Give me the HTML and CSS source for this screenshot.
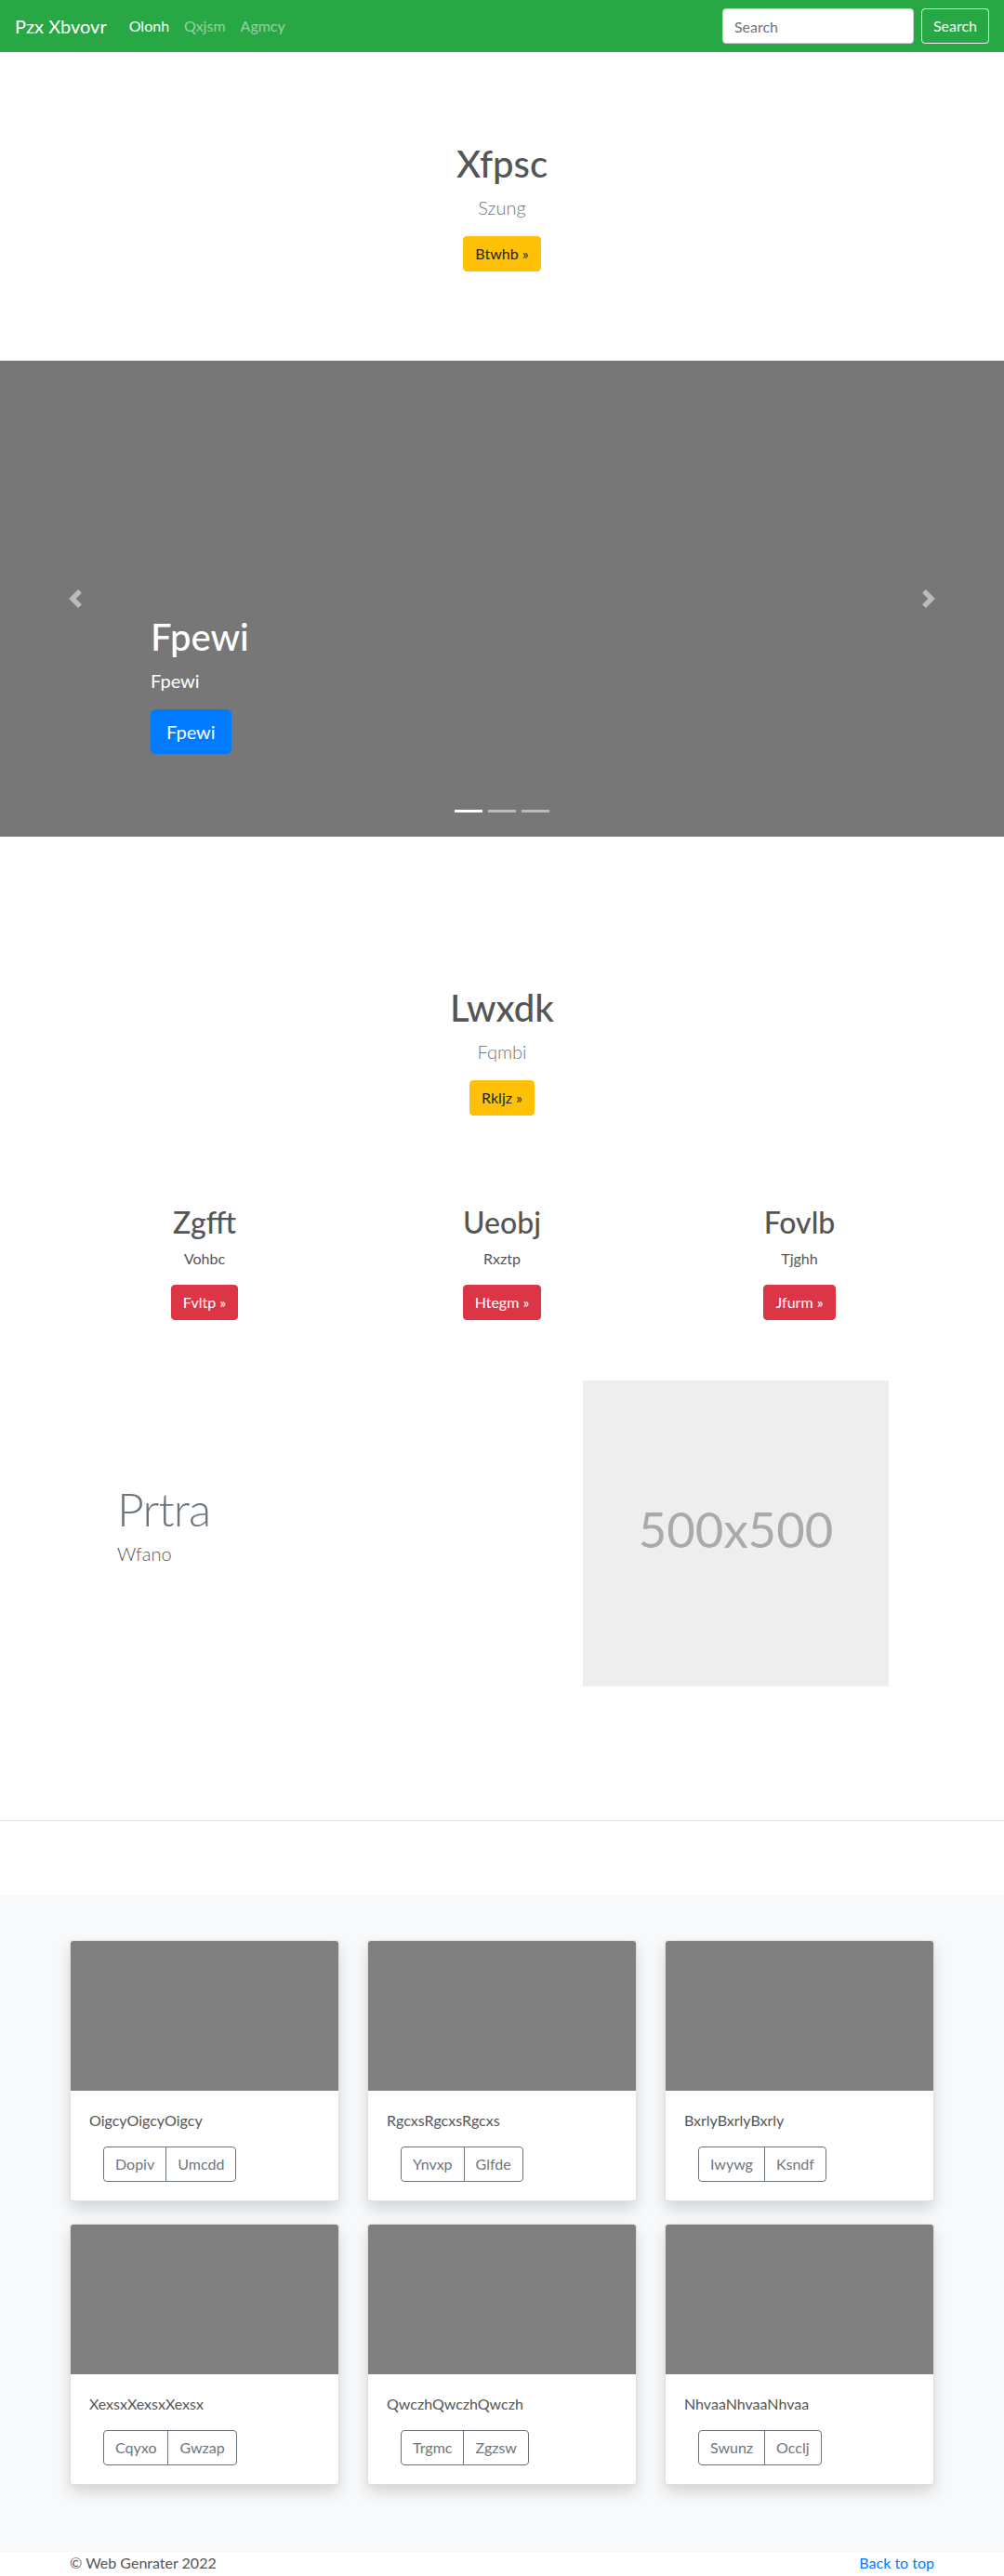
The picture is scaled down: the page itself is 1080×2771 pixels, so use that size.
FILE: index.html
```html
<!DOCTYPE html>
<html lang="en">
<head>
<meta charset="utf-8">
<title>Pzx Xbvovr</title>
<link rel="stylesheet" href="styles.css">
</head>
<body>
<header class="navbar">
  <a class="brand" href="#">Pzx Xbvovr</a>
  <ul class="nav">
    <li><a class="nav-link active" href="#">Olonh</a></li>
    <li><a class="nav-link" href="#">Qxjsm</a></li>
    <li><a class="nav-link" href="#">Agmcy</a></li>
  </ul>
  <form class="search">
    <input class="search-input" type="text" placeholder="Search">
    <button class="btn btn-outline-light" type="button">Search</button>
  </form>
</header>

<main>
  <section class="hero">
    <h1 class="hero-title">Xfpsc</h1>
    <p class="lead">Szung</p>
    <a class="btn btn-warning" href="#">Btwhb &raquo;</a>
  </section>

  <div class="carousel">
    <ol class="indicators">
      <li class="active"></li>
      <li></li>
      <li></li>
    </ol>
    <div class="caption">
      <h1 class="caption-title">Fpewi</h1>
      <p class="caption-text">Fpewi</p>
      <p class="caption-action"><a class="btn btn-lg btn-primary" href="#">Fpewi</a></p>
    </div>
    <a class="control control-prev" href="#">
      <svg viewBox="0 0 8 8" width="20" height="20"><path fill="#fff" d="M5.25 0l-4 4 4 4 1.5-1.5L4.25 4l2.5-2.5L5.25 0z"/></svg>
    </a>
    <a class="control control-next" href="#">
      <svg viewBox="0 0 8 8" width="20" height="20"><path fill="#fff" d="M2.75 0l-1.5 1.5L3.75 4l-2.5 2.5L2.75 8l4-4-4-4z"/></svg>
    </a>
  </div>

  <section class="hero hero-second">
    <h1 class="hero-title">Lwxdk</h1>
    <p class="lead">Fqmbi</p>
    <a class="btn btn-warning" href="#">Rkljz &raquo;</a>
  </section>

  <div class="marketing">
    <div class="col">
      <h2 class="col-title">Zgfft</h2>
      <p class="col-text">Vohbc</p>
      <a class="btn btn-danger" href="#">Fvltp &raquo;</a>
    </div>
    <div class="col">
      <h2 class="col-title">Ueobj</h2>
      <p class="col-text">Rxztp</p>
      <a class="btn btn-danger" href="#">Htegm &raquo;</a>
    </div>
    <div class="col">
      <h2 class="col-title">Fovlb</h2>
      <p class="col-text">Tjghh</p>
      <a class="btn btn-danger" href="#">Jfurm &raquo;</a>
    </div>
  </div>

  <div class="featurette">
    <div class="feature-text">
      <h2 class="feature-heading">Prtra</h2>
      <p class="feature-lead">Wfano</p>
    </div>
    <svg class="feature-img" viewBox="0 0 500 500" width="329" height="329">
      <rect width="100%" height="100%" fill="#eee"/>
      <text x="50%" y="50%" fill="#aaa" dy=".3em" text-anchor="middle" class="placeholder-text">500x500</text>
    </svg>
  </div>

  <hr class="divider">

  <div class="album">
    <div class="album-grid">
      <div class="card">
        <div class="card-img"></div>
        <div class="card-body">
          <p class="card-text">OigcyOigcyOigcy</p>
          <div class="btn-group"><button class="btn btn-outline-secondary" type="button">Dopiv</button><button class="btn btn-outline-secondary" type="button">Umcdd</button></div>
        </div>
      </div>
      <div class="card">
        <div class="card-img"></div>
        <div class="card-body">
          <p class="card-text">RgcxsRgcxsRgcxs</p>
          <div class="btn-group"><button class="btn btn-outline-secondary" type="button">Ynvxp</button><button class="btn btn-outline-secondary" type="button">Glfde</button></div>
        </div>
      </div>
      <div class="card">
        <div class="card-img"></div>
        <div class="card-body">
          <p class="card-text">BxrlyBxrlyBxrly</p>
          <div class="btn-group"><button class="btn btn-outline-secondary" type="button">Iwywg</button><button class="btn btn-outline-secondary" type="button">Ksndf</button></div>
        </div>
      </div>
      <div class="card">
        <div class="card-img"></div>
        <div class="card-body">
          <p class="card-text">XexsxXexsxXexsx</p>
          <div class="btn-group"><button class="btn btn-outline-secondary" type="button">Cqyxo</button><button class="btn btn-outline-secondary" type="button">Gwzap</button></div>
        </div>
      </div>
      <div class="card">
        <div class="card-img"></div>
        <div class="card-body">
          <p class="card-text">QwczhQwczhQwczh</p>
          <div class="btn-group"><button class="btn btn-outline-secondary" type="button">Trgmc</button><button class="btn btn-outline-secondary" type="button">Zgzsw</button></div>
        </div>
      </div>
      <div class="card">
        <div class="card-img"></div>
        <div class="card-body">
          <p class="card-text">NhvaaNhvaaNhvaa</p>
          <div class="btn-group"><button class="btn btn-outline-secondary" type="button">Swunz</button><button class="btn btn-outline-secondary" type="button">Occlj</button></div>
        </div>
      </div>
    </div>
  </div>
</main>

<footer class="footer">
  <p class="copy">&copy; Web Genrater 2022</p>
  <p class="back"><a href="#">Back to top</a></p>
</footer>
</body>
</html>
```

FILE: styles.css
```css
* { box-sizing: border-box; }

body {
  margin: 0;
  font-family: Lato, "Noto Sans", "Liberation Sans", sans-serif;
  font-size: 16px;
  line-height: 1.5;
  color: #555;
  background: #fff;
}

/* Navbar */
.navbar {
  display: flex;
  align-items: center;
  height: 56px;
  padding: 8px 16px;
  background: #28a745;
}
.brand {
  font-size: 20px;
  line-height: 30px;
  padding: 5px 0;
  margin-right: 16px;
  color: #fff;
  text-decoration: none;
}
.nav {
  display: flex;
  list-style: none;
  margin: 0;
  padding: 0;
}
.nav-link {
  display: block;
  padding: 8px;
  line-height: 24px;
  color: rgba(255, 255, 255, 0.5);
  text-decoration: none;
}
.nav-link.active { color: #fff; }
.search {
  margin: 0 0 0 auto;
  display: flex;
}
.search-input {
  width: 206px;
  height: 38px;
  margin-right: 8px;
  padding: 6px 12px;
  font: inherit;
  color: #495057;
  background: #fff;
  border: 1px solid #ced4da;
  border-radius: 4px;
}
.search-input::placeholder { color: #6c757d; }

/* Buttons */
.btn {
  display: inline-block;
  font-family: inherit;
  font-size: 16px;
  line-height: 24px;
  padding: 6px 12px;
  border: 1px solid transparent;
  border-radius: 4px;
  text-decoration: none;
  background: transparent;
  cursor: pointer;
}
.btn-outline-light { color: #f8f9fa; border-color: #f8f9fa; }
.btn-warning { color: #212529; background: #ffc107; border-color: #ffc107; }
.btn-danger { color: #fff; background: #dc3545; border-color: #dc3545; }
.btn-primary { color: #fff; background: #007bff; border-color: #007bff; }
.btn-outline-secondary { color: #6c757d; border-color: #6c757d; }
.btn-lg {
  font-size: 20px;
  line-height: 30px;
  padding: 8px 16px;
  border-radius: 5px;
}

/* Hero */
.hero {
  text-align: center;
  padding: 96px 0;
}
.hero-title {
  font-size: 40px;
  font-weight: 500;
  line-height: 1.2;
  margin: 0 0 8px;
}
.lead {
  font-size: 20px;
  font-weight: 300;
  line-height: 30px;
  margin: 0 0 16px;
  color: #6c757d;
}
.hero-second { padding-top: 96px; }

/* Carousel */
.carousel {
  position: relative;
  height: 512px;
  margin-bottom: 64px;
  background: #777;
  overflow: hidden;
}
.caption {
  position: absolute;
  left: 15%;
  right: 15%;
  bottom: 53px;
  padding: 20px 0;
  color: #fff;
  text-align: left;
  z-index: 10;
}
.caption-title {
  font-size: 40px;
  font-weight: 500;
  line-height: 1.2;
  margin: 0 0 8px;
}
.caption-text {
  font-size: 20px;
  line-height: 30px;
  margin: 0 0 16px;
}
.caption-action { margin: 0 0 16px; }
.control {
  position: absolute;
  top: 0;
  bottom: 0;
  width: 15%;
  display: flex;
  align-items: center;
  justify-content: center;
  opacity: 0.5;
}
.control svg { display: block; }
.control-prev { left: 0; }
.control-next { right: 0; }
.indicators {
  position: absolute;
  left: 0;
  right: 0;
  bottom: 0;
  margin: 0 0 16px;
  padding: 0;
  list-style: none;
  display: flex;
  justify-content: center;
  z-index: 15;
}
.indicators li {
  width: 30px;
  height: 23px;
  margin: 0 3px;
  border-top: 10px solid transparent;
  border-bottom: 10px solid transparent;
  background: #fff;
  background-clip: padding-box;
  opacity: 0.5;
}
.indicators li.active { opacity: 1; }

/* Marketing columns */
.marketing {
  width: 960px;
  margin: 0 auto;
  display: grid;
  grid-template-columns: repeat(3, 1fr);
  padding-bottom: 65px;
}
.col {
  text-align: center;
  padding: 0 15px;
}
.col-title {
  font-size: 32px;
  font-weight: 500;
  line-height: 1.2;
  margin: 0 0 8px;
}
.col-text {
  margin: 0 0 16px;
}

/* Featurette */
.featurette {
  display: flex;
  align-items: center;
  padding-left: 126px;
}
.feature-text {
  flex: 0 0 501px;
}
.feature-heading {
  font-size: 50px;
  font-weight: 300;
  line-height: 1;
  letter-spacing: -0.8px;
  margin: 0 0 8px;
  color: #6c757d;
}
.feature-lead {
  font-size: 20px;
  font-weight: 300;
  line-height: 30px;
  margin: 0 0 16px;
}
.feature-img {
  display: block;
  flex: 0 0 329px;
}
.placeholder-text {
  font-family: Lato, "Noto Sans", sans-serif;
  font-size: 80px;
}

.divider {
  margin: 144px 0 80px;
  border: 0;
  border-top: 1px solid rgba(0, 0, 0, 0.1);
}

/* Album */
.album {
  background: #f8f9fa;
  padding: 48px 0;
}
.album-grid {
  width: 930px;
  margin: 0 auto;
  display: grid;
  grid-template-columns: repeat(3, 290px);
  column-gap: 30px;
  row-gap: 24px;
  padding-bottom: 24px;
}
.card {
  background: #fff;
  border: 1px solid rgba(0, 0, 0, 0.125);
  border-radius: 4px;
  overflow: hidden;
  box-shadow: 0 8px 16px rgba(0, 0, 0, 0.15);
}
.card-img {
  height: 161px;
  background: #808080;
}
.card-body {
  padding: 20px;
}
.card-text {
  margin: 0 0 16px;
}
.btn-group {
  display: inline-flex;
  margin-left: 15px;
}
.btn-group .btn:first-child {
  border-top-right-radius: 0;
  border-bottom-right-radius: 0;
}
.btn-group .btn + .btn {
  margin-left: -1px;
  border-top-left-radius: 0;
  border-bottom-left-radius: 0;
}

/* Footer */
.footer {
  width: 930px;
  margin: 0 auto;
  display: flex;
  justify-content: space-between;
}
.footer p { margin: 0; }
.back a {
  color: #007bff;
  text-decoration: none;
}
```
